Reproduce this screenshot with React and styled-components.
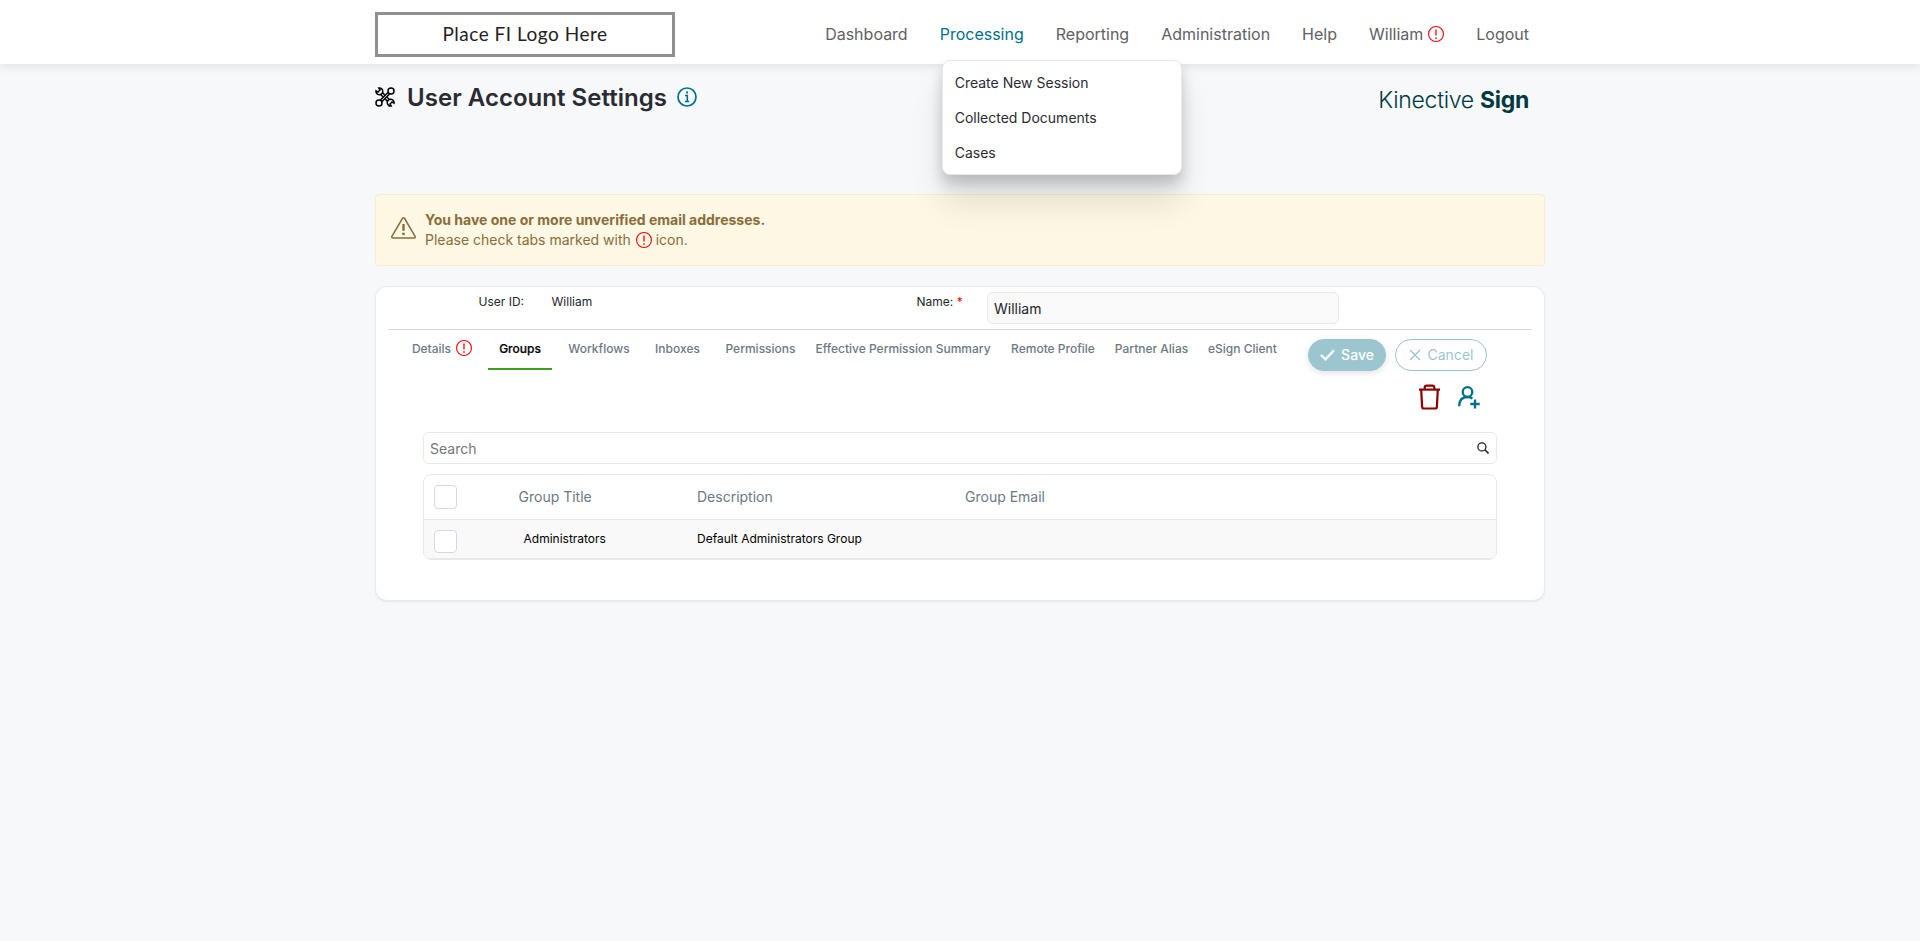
import React, { useState } from "react";
import styled, { createGlobalStyle, css } from "styled-components";

const navItems = [
  { label: "Dashboard" },
  {
    label: "Processing",
    children: ["Create New Session", "Collected Documents", "Cases"],
  },
  { label: "Reporting" },
  { label: "Administration" },
  { label: "Help" },
  { label: "William", alert: true },
  { label: "Logout" },
];

const tabs = [
  { label: "Details", alert: true, width: 84 },
  { label: "Groups", width: 64 },
  { label: "Workflows", width: 86 },
  { label: "Inboxes", width: 63 },
  { label: "Permissions", width: 95 },
  { label: "Effective Permission Summary", width: 182 },
  { label: "Remote Profile", width: 110 },
  { label: "Partner Alias", width: 79 },
  { label: "eSign Client", width: 95 },
];

const groups = [
  {
    title: "Administrators",
    description: "Default Administrators Group",
    email: "",
  },
];

const AlertIcon = () => (
  <svg width="16" height="16" viewBox="0 0 16 16" fill="none">
    <circle cx="8" cy="8" r="7.45" stroke="#fb0007" strokeWidth="1.1" />
    <path d="M8 3.4v6" stroke="#fb0007" strokeWidth="1.3" />
    <path d="M8 11.2v1.5" stroke="#fb0007" strokeWidth="1.5" />
  </svg>
);

// two crossed wrenches, the ringed one lies on top
const ToolsIcon = () => (
  <svg width="20" height="20" viewBox="0 0 20 20" fill="none" stroke="#000" strokeWidth="1.5">
    <path d="M1 3.8 3 5 5 3 3.8 1A3.4 3.4 0 1 1 1 3.8Z" />
    <path d="M19 16.2 17 15 15 17l1.2 2A3.4 3.4 0 1 1 19 16.2Z" />
    <path d="m5.5 7.3 2.4 2.4M7.3 5.5l2.4 2.4M10.3 12.1l2.4 2.4M12.1 10.3l2.4 2.4" />
    <circle cx="16" cy="4" r="3" />
    <circle cx="4" cy="16" r="3" />
    <path d="m5.2 13.2 8-8M6.800 14.800l8-8" />
  </svg>
);

const InfoIcon = () => (
  <svg width="20" height="20" viewBox="0 0 20 20" fill="none" stroke="#00708a">
    <circle cx="10" cy="10" r="9" strokeWidth="1.7" />
    <path d="M8 8.5h2.3v6M7.9 14.5h4.3" strokeWidth="1.6" />
    <path d="M9.1 5.6h1.9" strokeWidth="2" />
  </svg>
);

const WarningIcon = () => (
  <svg width="25" height="22" viewBox="0 0 25 22" fill="none" stroke="#8a6d3b">
    <path
      d="M11.4 1.5.9 19.3c-.4.8 0 1.6.8 1.6h21.6c.8 0 1.2-.8.8-1.6L13.6 1.5c-.5-.9-1.7-.9-2.2 0Z"
      strokeWidth="1.5"
      strokeLinejoin="round"
    />
    <path d="M12.5 7v6.8" strokeWidth="2.4" />
    <path d="M12.5 15.7v2.3" strokeWidth="2.6" />
  </svg>
);

const CheckIcon = () => (
  <svg width="15" height="12" viewBox="0 0 15 12" fill="none">
    <path d="m1 6 4.5 4.3L14 1.2" stroke="#fff" strokeWidth="2.3" />
  </svg>
);

const CrossIcon = () => (
  <svg width="12" height="12" viewBox="0 0 12 12" fill="none">
    <path d="m1 1 10 10M11 1 1 11" stroke="#9bc5cf" strokeWidth="1.4" />
  </svg>
);

const TrashIcon = () => (
  <svg width="21" height="26" viewBox="0 0 21 26" fill="none" stroke="#8e0000" strokeWidth="2.2">
    <path d="M0 5.6h21" />
    <path d="M5.7 5V3.5C5.7 2.3 6.5 1.6 7.7 1.6h5.6c1.2 0 2 .7 2 1.9V5" />
    <path d="m2.2 5.6.9 17.2c.1 1.1.8 1.7 1.8 1.7h11.2c1 0 1.7-.6 1.8-1.7l.9-17.2" />
  </svg>
);

const AddUserIcon = () => (
  <svg width="22" height="23" viewBox="0 0 22 23" fill="none" stroke="#00708a" strokeWidth="2.3">
    <circle cx="9.5" cy="6" r="4.8" />
    <path d="M1.2 20.3C1.2 14 4.5 11 9.5 11c2.3 0 3.5.5 4.9 1.5" />
    <path d="M17 13.5V22.5M12.3 18h9.4" />
  </svg>
);

const SearchIcon = () => (
  <svg width="12" height="12" viewBox="0 0 12 12" fill="none" stroke="#222">
    <circle cx="4.9" cy="4.9" r="4" strokeWidth="1.3" />
    <path d="m7.8 7.8 3.8 3.7" strokeWidth="1.6" />
  </svg>
);

const App = () => {
  const [activeTab, setActiveTab] = useState("Groups");
  const [name, setName] = useState("William");
  const [search, setSearch] = useState("");

  return (
    <>
      <GlobalStyle />
      <Header>
        <Container className="header-inner">
          <LogoBox>Place FI Logo Here</LogoBox>
          <Nav>
            {navItems.map((item) => (
              <NavItem key={item.label}>
                <NavLink href="#" $active={!!item.children}>
                  {item.label}
                  {item.alert && <AlertIcon />}
                </NavLink>
                {item.children && (
                  <DropDown>
                    {item.children.map((child) => (
                      <li key={child}>
                        <a href="#">{child}</a>
                      </li>
                    ))}
                  </DropDown>
                )}
              </NavItem>
            ))}
          </Nav>
        </Container>
      </Header>

      <Container as="main">
        <TitleRow>
          <PageTitle>
            <ToolsIcon />
            <h1>User Account Settings</h1>
            <InfoIcon />
          </PageTitle>
          <Brand>
            Kinective <b>Sign</b>
          </Brand>
        </TitleRow>

        <Notice>
          <WarningIcon />
          <div>
            <strong>You have one or more unverified email addresses.</strong>
            <p>
              Please check tabs marked with <AlertIcon /> icon.
            </p>
          </div>
        </Notice>

        <Card>
          <UserRow>
            <UserLabel>User ID:</UserLabel>
            <UserValue>William</UserValue>
            <NameLabel>
              Name: <span>*</span>
            </NameLabel>
            <NameInput value={name} onChange={(e) => setName(e.target.value)} />
          </UserRow>

          <TabRow>
            <Tabs>
              {tabs.map((tab) => (
                <Tab
                  key={tab.label}
                  $width={tab.width}
                  $active={tab.label === activeTab}
                  onClick={() => setActiveTab(tab.label)}
                >
                  {tab.label}
                  {tab.alert && <AlertIcon />}
                </Tab>
              ))}
            </Tabs>
            <Button $primary>
              <CheckIcon />
              Save
            </Button>
            <Button>
              <CrossIcon />
              Cancel
            </Button>
          </TabRow>

          <Actions>
            <IconButton aria-label="Delete">
              <TrashIcon />
            </IconButton>
            <IconButton aria-label="Add">
              <AddUserIcon />
            </IconButton>
          </Actions>

          <SearchBox>
            <input
              placeholder="Search"
              value={search}
              onChange={(e) => setSearch(e.target.value)}
            />
            <SearchIcon />
          </SearchBox>

          <Table>
            <HeadRow>
              <CheckBox $tall />
              <span>Group Title</span>
              <span>Description</span>
              <span>Group Email</span>
            </HeadRow>
            {groups.map((group) => (
              <BodyRow key={group.title}>
                <CheckBox />
                <span className="group-title">{group.title}</span>
                <span>{group.description}</span>
                <span>{group.email}</span>
              </BodyRow>
            ))}
          </Table>
        </Card>
      </Container>
    </>
  );
};

const GlobalStyle = createGlobalStyle`
  * {
    margin: 0;
    padding: 0;
    box-sizing: border-box;
  }

  body {
    min-height: 100vh;
    background-color: #f6f8fa;
    color: #212529;
    font-family: Inter, "Liberation Sans", sans-serif;
    font-size: 14px;
  }

  button, input {
    font-family: inherit;
  }

  svg {
    display: block;
    flex-shrink: 0;
  }
`;

const Container = styled.div`
  width: 1170px;
  margin: 0 auto;

  &.header-inner {
    display: flex;
    justify-content: space-between;
    height: 64px;
    padding: 12px 16px 0 0;
  }
`;

const Header = styled.header`
  height: 64px;
  background-color: #fff;
  box-shadow: 0 2px 10px rgba(0, 0, 0, 0.1);
`;

const LogoBox = styled.div`
  display: flex;
  align-items: center;
  justify-content: center;
  width: 300px;
  height: 45px;
  padding-bottom: 2px;
  border: 3px solid #8f8f8f;
  color: #222;
  font-family: Lato, sans-serif;
  font-size: 19px;
  letter-spacing: 0.5px;
`;

const Nav = styled.ul`
  display: flex;
  gap: 32px;
  height: 44px;
  list-style: none;
`;

const NavItem = styled.li`
  position: relative;
`;

const NavLink = styled.a`
  display: flex;
  align-items: center;
  gap: 5px;
  height: 44px;
  font-size: 16px;
  text-decoration: none;
  color: ${({ $active }) => ($active ? "#00708a" : "#5f6163")};
`;

const DropDown = styled.ul`
  position: absolute;
  top: 48px;
  left: 2px;
  z-index: 10;
  width: 240px;
  height: 115px;
  padding: 4px 12px;
  border: 1px solid #e6e8eb;
  border-radius: 8px;
  background-color: #fff;
  box-shadow: 0 28px 32px rgba(0, 0, 0, 0.1), 0 8px 14px rgba(0, 0, 0, 0.18);
  list-style: none;

  li {
    height: 35px;
    line-height: 35px;
  }

  a {
    color: #2a2b33;
    font-size: 14px;
    text-decoration: none;
  }
`;

const TitleRow = styled.div`
  display: flex;
  justify-content: space-between;
  height: 130px;
  padding: 17px 16px 0 0;
`;

const PageTitle = styled.div`
  display: flex;
  align-items: center;
  height: 32px;

  h1 {
    margin: 0 10.5px 0 12px;
    color: #2a2b33;
    font-size: 24px;
    font-weight: 600;
    letter-spacing: 0.03px;
  }
`;

const Brand = styled.div`
  padding-top: 3px;
  color: #003840;
  font-size: 23px;
  font-weight: 300;
  letter-spacing: -0.3px;
  line-height: 32px;

  b {
    font-weight: 700;
  }
`;

const Notice = styled.div`
  display: flex;
  align-items: flex-start;
  gap: 9px;
  height: 72px;
  padding: 15px;
  border: 1px solid #faebcc;
  border-radius: 4px;
  background-color: #fcf8e3;
  color: #8a6d3b;
  line-height: 20px;

  > svg {
    margin-top: 7px;
  }

  p svg {
    display: inline-block;
    margin-left: 1px;
    vertical-align: -3px;
  }
`;

const Card = styled.section`
  height: 315px;
  margin-top: 20px;
  padding: 0 12px;
  border: 1px solid #e9eaec;
  border-radius: 12px;
  background-color: #fff;
  box-shadow: 0 1px 2px rgba(0, 0, 0, 0.08);
`;

const UserRow = styled.div`
  display: flex;
  height: 43px;
  padding-top: 5px;
  border-bottom: 1px solid #d6d8e1;
  font-size: 12px;
  line-height: 20px;
`;

const UserLabel = styled.label`
  width: 163.5px;
  padding-left: 90.5px;
`;

const UserValue = styled.span`
  width: 365px;
`;

const NameLabel = styled.label`
  width: 70.5px;

  span {
    color: #f00;
  }
`;

const NameInput = styled.input`
  width: 352px;
  height: 32px;
  padding: 0 6px;
  border: 1px solid #e7e8ea;
  border-radius: 6px;
  background-color: #fafafa;
  color: #212529;
  font-size: 14px;
`;

const TabRow = styled.div`
  display: flex;
  height: 53px;
  padding: 9px 45px 0 12px;
`;

const Tabs = styled.div`
  display: flex;
  flex: 1;
  gap: 4px;
`;

const Tab = styled.button`
  display: flex;
  align-items: center;
  justify-content: center;
  gap: 5px;
  width: ${({ $width }) => $width}px;
  height: 31px;
  padding-bottom: 11px;
  border: none;
  border-bottom: 2px solid ${({ $active }) => ($active ? "#38a01c" : "transparent")};
  background: none;
  color: ${({ $active }) => ($active ? "#000" : "#6c7983")};
  font-size: 12px;
  font-weight: 500;
  white-space: nowrap;
  cursor: pointer;
  ${({ $active }) => $active && "-webkit-text-stroke: 0.2px #000;"}
`;

const Button = styled.button`
  display: flex;
  flex-shrink: 0;
  align-items: center;
  justify-content: center;
  gap: 7px;
  width: 92px;
  height: 32px;
  margin-left: 9px;
  padding-bottom: 1px;
  border: 1px solid #9bc5cf;
  border-radius: 16px;
  background-color: #fff;
  color: #9bc5cf;
  font-size: 14px;

  ${({ $primary }) =>
    $primary &&
    css`
      gap: 6px;
      width: 78px;
      background-color: #9bc5cf;
      color: #fff;
      font-weight: 500;
      box-shadow: 0 2px 6px rgba(0, 0, 0, 0.12);
    `}
`;

const Actions = styled.div`
  display: flex;
  justify-content: flex-end;
  gap: 18px;
  height: 49px;
  padding: 1px 52px 0 0;
`;

const IconButton = styled.button`
  display: flex;
  align-items: center;
  height: 26px;
  border: none;
  background: none;
  cursor: pointer;
`;

const SearchBox = styled.div`
  display: flex;
  align-items: center;
  width: 1074px;
  height: 32px;
  margin: 0 auto;
  padding: 0 7px 0 6px;
  border: 1px solid #e7e8ea;
  border-radius: 6px;

  input {
    flex: 1;
    border: none;
    outline: none;
    font-size: 14px;

    &::placeholder {
      color: #757575;
    }
  }
`;

const Table = styled.div`
  width: 1074px;
  margin: 10px auto 0;
  overflow: hidden;
  border: 1px solid #e7e8ea;
  border-radius: 8px;
`;

const Row = styled.div`
  display: grid;
  grid-template-columns: 84.5px 178.5px 268px 1fr;
  padding-left: 10px;
`;

const HeadRow = styled(Row)`
  height: 44px;
  padding-top: 10px;
  color: #6c7983;
  line-height: 23px;
`;

const BodyRow = styled(Row)`
  height: 40px;
  border-top: 1px solid #e7e8ea;
  border-bottom: 1px solid #e7e8ea;
  background-color: #f9f9f9;
  color: #000;
  font-size: 12px;
  line-height: 37px;

  .group-title {
    padding-left: 5px;
  }
`;

const CheckBox = styled.span`
  width: 23px;
  height: ${({ $tall }) => ($tall ? 24 : 23)}px;
  border: 1px solid #d6d8e1;
  border-radius: 4px;
  background-color: #fff;

  ${BodyRow} & {
    margin-top: 10px;
  }
`;

export default App;
